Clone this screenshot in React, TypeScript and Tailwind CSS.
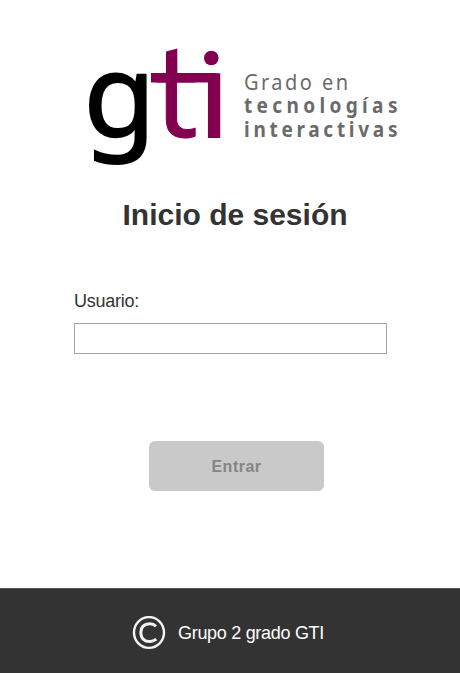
function Logo() {
  return (
    <svg width="330" height="130" viewBox="80 40 330 130" className="block overflow-visible" role="img" aria-label="Grado en tecnologías interactivas">
      <g fontFamily="'Noto Sans', sans-serif">
        <text transform="translate(83.5 135.8) scale(1.02 1)" fontSize="115" fill="#000" stroke="#000" strokeWidth="1.8">g</text>
        <g fill="#830051">
          <text transform="translate(155.6 136.7)" fontSize="117" stroke="#830051" strokeWidth="1">t</text>
          <text transform="translate(198.9 136.5)" fontSize="117" stroke="#830051" strokeWidth="2">ı</text>
          <path d="M166 51.5L177.3 48.5V76H166z" />
          <path d="M151 73h63q6 0 6 6v3.5H151z" />
          <circle cx="211.3" cy="58" r="7.3" />
        </g>
      </g>
      <g fontFamily="'Noto Sans', sans-serif" fill="#6b6b6b">
        <text transform="translate(244 89.5) scale(0.93 1)" fontSize="21.5" textLength="112" lengthAdjust="spacing">Grado en</text>
        <text transform="translate(244 113) scale(0.93 1)" fontSize="20.5" fontWeight="700" textLength="165" lengthAdjust="spacing">tecnologías</text>
        <text transform="translate(244 137) scale(0.93 1)" fontSize="20.5" fontWeight="700" textLength="165" lengthAdjust="spacing">interactivas</text>
      </g>
    </svg>
  );
}

function CopyrightIcon() {
  return (
    <svg width="34" height="34" viewBox="0 0 34 34" fill="none" stroke="#f3f3f3" className="shrink-0" aria-hidden="true">
      <ellipse cx="17" cy="16.5" rx="15" ry="15.4" strokeWidth="2.4" />
      <path d="M24 10.3Q21.5 7.8 18 7.8Q8.8 8 8.8 16.7Q9 25.5 18 25.5Q21.5 25.5 24.3 23.2" strokeWidth="3" />
    </svg>
  );
}

export default function App() {
  return (
    <div className="flex h-[673px] w-full flex-col bg-white font-['Liberation_Sans',Arial,sans-serif] text-[#333]">
      <main className="flex flex-1 flex-col">
        <div className="pt-10 pl-20"><Logo /></div>
        <h1 className="mt-[25px] pl-[10px] text-center text-[30px] leading-10 font-bold">Inicio de sesión</h1>
        <form className="flex flex-col px-[74px] pt-[54px]">
          <label htmlFor="user" className="text-[18px] leading-6 tracking-[-0.25px]">Usuario:</label>
          <input id="user" className="mt-[10px] h-[31px] w-[313px] border border-[#a5a5a5] bg-white px-2 outline-none" />
          <button type="button" disabled className="mt-[87px] ml-[75px] h-[50px] w-[175px] rounded-md bg-[#c9c9c9] pt-0.5 text-[16px] font-bold tracking-[0.5px] text-[#858585]">Entrar</button>
        </form>
      </main>
      <footer className="flex h-[85px] items-center border-t border-[#555] bg-[#333] pt-1 pl-[132px] text-[18px] text-white">
        <CopyrightIcon />
        <span className="ml-3 tracking-[-0.3px]">Grupo 2 grado GTI</span>
      </footer>
    </div>
  );
}
